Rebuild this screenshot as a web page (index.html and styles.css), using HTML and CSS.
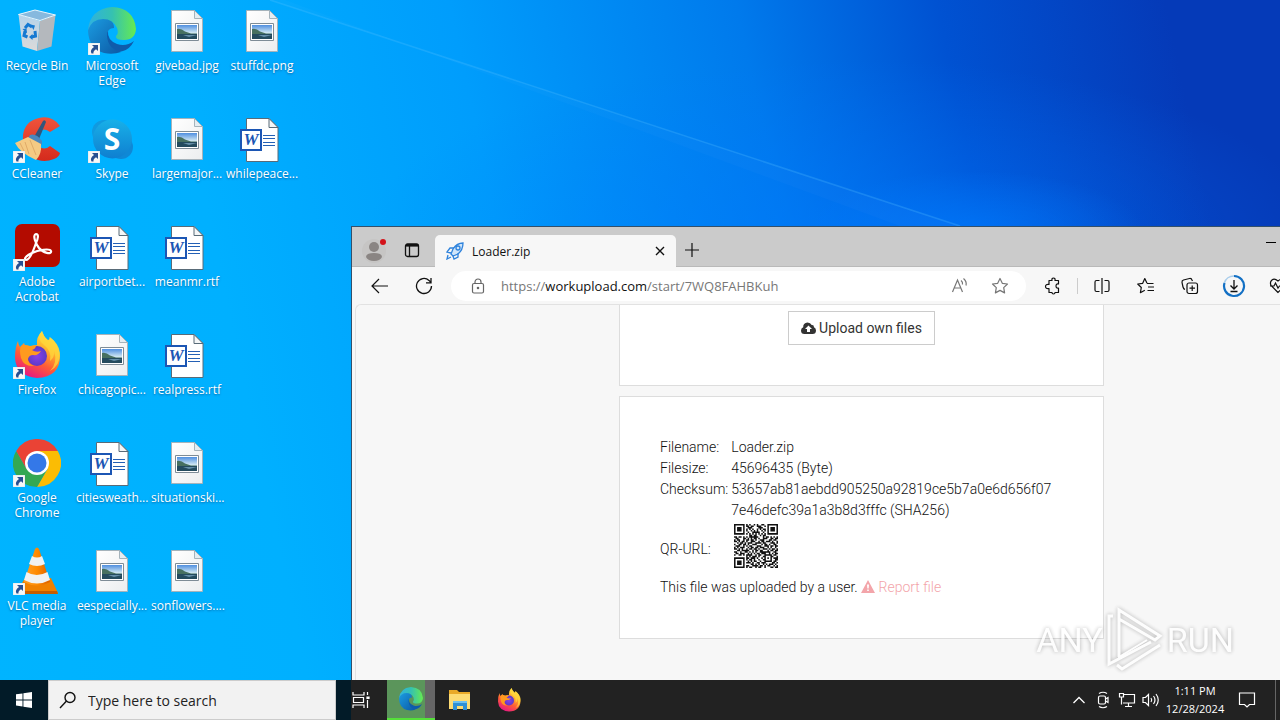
FILE: index.html
```html
<!DOCTYPE html>
<html lang="en">
<head>
<meta charset="utf-8">
<title>Desktop</title>
<link rel="stylesheet" href="styles.css">
</head>
<body>
<svg class="defs" aria-hidden="true">
  <defs>
    <linearGradient id="edgeBlue" x1="0" y1="0" x2="1" y2="1"><stop offset="0" stop-color="#1b9de2"/><stop offset="1" stop-color="#0c59a4"/></linearGradient>
    <linearGradient id="edgeTop" x1="0" y1="0" x2="1" y2="0"><stop offset="0" stop-color="#2fb1e0"/><stop offset=".5" stop-color="#35c1b1"/><stop offset="1" stop-color="#66eb50"/></linearGradient>
    <linearGradient id="skypeG" x1="0" y1="0" x2="0" y2="1"><stop offset="0" stop-color="#18b0e8"/><stop offset="1" stop-color="#0f7fd0"/></linearGradient>
    <linearGradient id="foxG" x1=".8" y1="0" x2=".3" y2="1"><stop offset="0" stop-color="#fff44f"/><stop offset=".35" stop-color="#ffb32c"/><stop offset=".65" stop-color="#ff5b36"/><stop offset="1" stop-color="#e61587"/></linearGradient>
    <radialGradient id="foxP"><stop offset="0" stop-color="#8a40e8"/><stop offset="1" stop-color="#5b3ac8"/></radialGradient>
    <linearGradient id="binG" x1="0" y1="0" x2="0" y2="1"><stop offset="0" stop-color="#b4d3ea"/><stop offset="1" stop-color="#dcdad9"/></linearGradient>
    <linearGradient id="pageG" x1="0" y1="0" x2="1" y2="1"><stop offset="0" stop-color="#fff"/><stop offset="1" stop-color="#eceeef"/></linearGradient>
    <linearGradient id="skyG" x1="0" y1="0" x2="0" y2="1"><stop offset="0" stop-color="#4f8fe0"/><stop offset=".55" stop-color="#cfe6f2"/></linearGradient>
    <linearGradient id="ccG" x1="0" y1="0" x2="0" y2="1"><stop offset="0" stop-color="#f0543c"/><stop offset="1" stop-color="#d42a1c"/></linearGradient>
    <linearGradient id="coneG" x1="0" y1="0" x2="1" y2="0"><stop offset="0" stop-color="#ffa02a"/><stop offset=".5" stop-color="#ff8a00"/><stop offset="1" stop-color="#d95f00"/></linearGradient>
  </defs>
  <symbol id="shortcut" viewBox="0 0 12 12"><path fill="#f7f7f7" stroke="#c9d4dc" stroke-width=".5" d="M0 0h12v12H0z"/><path fill="#284f91" d="M4 2h6v6L8 6.200Q5 8 5.500 10.500L3.500 10.500Q1.500 7 6 4z"/></symbol>
  <symbol id="bin" viewBox="0 0 48 48">
    <path fill="url(#binG)" d="M5.500 7.500 27 14 24 44 9.500 39.500z"/><path fill="#b4b8bd" d="M27 14 42.500 8 38.500 39.500 24 44z"/>
    <path fill="#86b9de" d="M5.500 7.500 22 3l20.500 5L27 13.500z"/><path fill="none" stroke="#e9f5fc" d="M5.500 7.500 22 3l20.500 5L27 13.500z"/>
    <g fill="none" stroke="#1479d2" stroke-width="3"><path d="m12 21 3-3.500 4 2.500M22 24l.500 5-4 1M14.500 30l-3.500-1.500 1-4.500"/></g>
    <g fill="#1479d2"><path d="m17.500 17.500 4.500 1-1.500 4.500zM19.500 27v6l-3.500-3zM9.500 22l4-.500.500 5z"/></g>
  </symbol>
  <symbol id="edge" viewBox="0 0 48 48">
    <path fill="#0f5cab" d="M11 17Q5 29 13 39q9 9 22 5 7-2 11-10Q38 40 29 37 19 33 20 24z"/>
    <path fill="url(#edgeBlue)" d="M0 24Q1 12 14 11q12 0 12 10-7 0-7 8 1 13 14 16-8 3-17 1Q1 42 0 24z"/>
    <path fill="url(#edgeTop)" d="M0 23Q2 2 24 0q22 1 24 22-1 11-12 11-9 0-8-4 3-3 1-8-4-9-14-9Q4 12 0 23z"/>
  </symbol>
  <symbol id="photo" viewBox="0 0 48 48">
    <path fill="url(#pageG)" stroke="#a5b3bb" d="M8.500 3.500h23l8 8v33h-31z"/><path fill="#e3edf2" stroke="#a5b3bb" d="M31.500 3.500v8h8z"/>
    <path fill="#fff" stroke="#7e8c96" d="M12.500 16.500h23v17h-23z"/><path fill="url(#skyG)" d="M14 18h20v14H14z"/><path fill="#477060" d="M14 22q4-1 8 2.500l6 2h6v2H14z"/><path fill="#244b5e" d="M14 27h20v5H14z"/><path fill="#658fa8" d="M20 28h14l-8 2z"/>
  </symbol>
  <symbol id="word" viewBox="0 0 48 48">
    <path fill="#fff" stroke="#596b78" d="M8.500 3.500H31l9 9v34H8.500z"/><path fill="#f4f6f7" stroke="#596b78" d="M31 3.500v9h9z"/>
    <g stroke="#2460b5" stroke-width="1.200"><path d="M25 20.500h12M25 23.500h12M25 27.500h12M25 30.500h12"/></g>
    <path fill="#fff" stroke="#1c56b4" stroke-width="2" d="M3 15h20v20H3z"/>
  </symbol>
  <symbol id="ccleaner" viewBox="0 0 48 48">
    <path fill="url(#ccG)" d="M47 11Q39 0 26 3 12 6 10 20q-1 15 9 22 10 7 22 2 5-2 6-6l-10-7q-6 5-11 0-5-6 0-14 5-5 11 0z"/>
    <path fill="#31567c" d="M30 6q2-2 3 1l-7 17-5-2z"/><path fill="#4b87bd" d="M17 20q6-2 12 6v4l-14-7z"/>
    <path fill="#f5ca83" d="M15 22 2 28q5 10 21 17 6-6 5-16z"/><path fill="none" stroke="#e0ab68" d="m12 27 4 12m1-14 6 15m-16-12 4 8"/>
  </symbol>
  <symbol id="skype" viewBox="0 0 48 48"><circle cx="16" cy="17" r="12" fill="#109ae0"/><circle cx="33" cy="32" r="12" fill="#0f88d6"/><circle cx="24.500" cy="24" r="19.500" fill="url(#skypeG)"/></symbol>
  <symbol id="acrobat" viewBox="0 0 48 48"><rect x="2" y="1" width="45" height="43" rx="7" fill="#b30b00"/><path fill="none" stroke="#fff" stroke-width="2.200" stroke-linejoin="round" d="M23 11c-4 1 0 10 3 14 4 5 13 7 12 3-1-3-13-1-19 2-5 2-9 6-6 7 4 0 8-11 10-17 2-4 3-9 0-9z"/></symbol>
  <symbol id="firefox" viewBox="0 0 48 48">
    <path fill="url(#foxG)" d="M5 10q0 3 2 6l4-4q1 4 5 4 5-2 8-2-1-8 5-14 1 5 6 9 3-1 2-3 9 7 10 19 0 21-23 22Q3 45 2 27 2 16 5 10z"/>
    <circle cx="24" cy="25" r="10" fill="url(#foxP)"/>
    <path fill="#ff9a1e" d="M8 15q4-2 9 0l6-1q0 4-4 5 4 3 9 1-3 5-8 4-4 0-5 4 0 5 6 7-10 1-13-8-2-8 0-12z"/><path fill="#ffd83c" d="M29 0q-6 8 2 14 8 6 6 16 5-4 4-10 4 12-4 20 10-5 10-18Q46 12 36 6q1 5-1 4-4-4-6-10z" opacity=".75"/>
  </symbol>
  <symbol id="chrome" viewBox="0 0 48 48"><path fill="#ea4335" d="M3.200 12A24 24 0 0 1 44.800 12H24z"/><path fill="#fbbc04" d="M44.800 12A24 24 0 0 1 24 48L34.400 30 24 12z"/><path fill="#34a853" d="M24 48A24 24 0 0 1 3.200 12L13.600 30l20.800 0z"/><path fill="#ea4335" d="M3.200 12 13.600 30 24 24V12z"/><circle cx="24" cy="24" r="12" fill="#fff"/><circle cx="24" cy="24" r="9.500" fill="#3478e8"/></symbol>
  <symbol id="vlc" viewBox="0 0 48 48"><path fill="#f08000" d="M12 31h26l7 15H3z"/><path fill="#c65d00" d="M4 44h40l1 3H3z"/><path fill="url(#coneG)" d="M22 2q2-3 4 0l11 33q-13 7-26 0z"/><path fill="#f1f1f1" d="m19 9-3 8q8 4 16 0l-3-8q-5 3-10 0zM13.500 25 11 33q13 7 26 0l-2.500-8q-11 6-21 0z"/></symbol>
  <symbol id="folder" viewBox="0 0 24 24"><path fill="#e9a928" d="M1 2h8l2 2h11v4H1z"/><path fill="#fddb73" d="M1 6h21v15H1z"/><path fill="#2f8fd5" d="M5 13h14v9h-4v-4H9v4H5z"/><path fill="#6ec0f0" d="M5 13h14v2H5z"/></symbol>
</svg>

<div class="desktop">
  <svg class="rays" viewBox="0 0 1280 720" preserveAspectRatio="none" aria-hidden="true"><path d="M270 0 960 226H900L285 0z" fill="#fff" opacity=".02"/><path d="m270 0 690 226" stroke="#5cc4ff" stroke-width="1.500" opacity=".25"/></svg>

  <main class="icons">
    <div class="item"><div class="pic"><svg><use href="#bin"/></svg></div><span>Recycle Bin</span></div>
    <div class="item"><div class="pic"><svg><use href="#ccleaner"/></svg><svg class="arrow"><use href="#shortcut"/></svg></div><span>CCleaner</span></div>
    <div class="item"><div class="pic"><svg><use href="#acrobat"/></svg><svg class="arrow"><use href="#shortcut"/></svg></div><span>Adobe Acrobat</span></div>
    <div class="item"><div class="pic"><svg><use href="#firefox"/></svg><svg class="arrow"><use href="#shortcut"/></svg></div><span>Firefox</span></div>
    <div class="item"><div class="pic"><svg><use href="#chrome"/></svg><svg class="arrow"><use href="#shortcut"/></svg></div><span>Google Chrome</span></div>
    <div class="item"><div class="pic"><svg><use href="#vlc"/></svg><svg class="arrow"><use href="#shortcut"/></svg></div><span>VLC media player</span></div>
    <div class="item"><div class="pic"><svg><use href="#edge"/></svg><svg class="arrow"><use href="#shortcut"/></svg></div><span>Microsoft Edge</span></div>
    <div class="item"><div class="pic"><svg><use href="#skype"/></svg><b class="skype-mark">S</b><svg class="arrow"><use href="#shortcut"/></svg></div><span>Skype</span></div>
    <div class="item"><div class="pic"><svg><use href="#word"/></svg><b class="word-mark">W</b></div><span>airportbet...</span></div>
    <div class="item"><div class="pic"><svg><use href="#photo"/></svg></div><span>chicagopic...</span></div>
    <div class="item"><div class="pic"><svg><use href="#word"/></svg><b class="word-mark">W</b></div><span>citiesweath...</span></div>
    <div class="item"><div class="pic"><svg><use href="#photo"/></svg></div><span>eespecially...</span></div>
    <div class="item"><div class="pic"><svg><use href="#photo"/></svg></div><span>givebad.jpg</span></div>
    <div class="item"><div class="pic"><svg><use href="#photo"/></svg></div><span>largemajor...</span></div>
    <div class="item"><div class="pic"><svg><use href="#word"/></svg><b class="word-mark">W</b></div><span>meanmr.rtf</span></div>
    <div class="item"><div class="pic"><svg><use href="#word"/></svg><b class="word-mark">W</b></div><span>realpress.rtf</span></div>
    <div class="item"><div class="pic"><svg><use href="#photo"/></svg></div><span>situationski...</span></div>
    <div class="item"><div class="pic"><svg><use href="#photo"/></svg></div><span>sonflowers....</span></div>
    <div class="item"><div class="pic"><svg><use href="#photo"/></svg></div><span>stuffdc.png</span></div>
    <div class="item"><div class="pic"><svg><use href="#word"/></svg><b class="word-mark">W</b></div><span>whilepeace...</span></div>
  </main>

  <section class="window" aria-label="Browser">
    <header class="tabstrip">
      <button class="profile" aria-label="Profile"><svg width="28" height="28" viewBox="0 0 28 28"><circle cx="12" cy="15" r="12" fill="#c6c5c4"/><circle cx="12" cy="11" r="5" fill="#8a8583"/><path fill="#8a8583" d="M4 21q0-4 8-4t8 4q-2 4-8 4t-8-4z"/><circle cx="21" cy="6" r="3" fill="#d3131a"/></svg></button>
      <button class="tabmenu" aria-label="Tab actions"><svg width="16" height="16" viewBox="0 0 16 16" fill="none" stroke="#111" stroke-width="1.300"><rect x="1.500" y="2" width="13" height="12.500" rx="2"/><path stroke-width="2.600" d="M2 3.300h12"/><path d="M5.500 4v10"/></svg></button>
      <div class="tab">
        <svg width="18" height="18" viewBox="0 0 18 18" fill="none" stroke="#2f83dc" stroke-width="1.300"><path fill="#cfe5fa" d="M17 1q-6 0-10 6l-2 5 2 2 5-2q5-4 5-11z"/><path d="M8 6H4L1 10l4 1M12 11v4l-4 2-1-3M2 13l-1 4 4-2"/><circle cx="12" cy="6" r="2"/></svg>
        <span class="title">Loader.zip</span>
        <button aria-label="Close tab"><svg width="10" height="10" viewBox="0 0 10 10" stroke="#111" stroke-width="1.400"><path d="m1 1 8 8m0-8-8 8"/></svg></button>
      </div>
      <button class="newtab" aria-label="New tab"><svg width="14" height="14" viewBox="0 0 14 14" stroke="#111" stroke-width="1.200"><path d="M0 7h14M7 0v14"/></svg></button>
      <button class="minimize" aria-label="Minimize"><svg width="10" height="10" viewBox="0 0 10 10" stroke="#000"><path d="M0 2.500h10"/></svg></button>
    </header>

    <nav class="toolbar">
      <button aria-label="Back"><svg width="18" height="16" viewBox="0 0 18 16" fill="none" stroke="#111" stroke-width="1.200"><path d="M17 8H1m7-7L1 8l7 7"/></svg></button>
      <button aria-label="Refresh"><svg width="18" height="18" viewBox="0 0 18 18" fill="none" stroke="#111" stroke-width="1.300"><path d="M16.500 9A7.500 7.500 0 1 1 14 3.400L16 5.500M16 1v4.800h-5"/></svg></button>
      <div class="address">
        <svg width="14" height="16" viewBox="0 0 14 16" fill="none" stroke="#666" stroke-width="1.200"><rect x="1.500" y="5.500" width="11" height="9.500" rx="1.500"/><path d="M4 5.500V4a3 3 0 0 1 6 0v1.500"/><circle cx="7" cy="10" r=".7" fill="#666"/></svg>
        <a class="url" href="#">https://<b>workupload.com</b>/start/7WQ8FAHBKuh</a>
        <button aria-label="Read aloud"><svg width="18" height="18" viewBox="0 0 18 18" fill="none" stroke="#777" stroke-width="1.200"><path d="m1.500 15 5-12 5 12M3.300 11h6.500M10 3.500q2 1.500 1.500 4M12.500 1.500q3.500 3 2.500 7"/></svg></button>
        <button aria-label="Add to favorites"><svg width="18" height="18" viewBox="0 0 18 18" fill="none" stroke="#777" stroke-width="1.200" stroke-linejoin="round"><path d="m9 1.500 2.300 4.800 5.200.7-3.800 3.600.9 5.300L9 13.400l-4.600 2.500.9-5.300L1.500 7l5.200-.7z"/></svg></button>
      </div>
      <button aria-label="Extensions"><svg width="18" height="18" viewBox="0 0 18 18" fill="none" stroke="#111" stroke-width="1.200" stroke-linejoin="round"><path d="M5 3.500h3q-.5-2.500 1.500-2.500t1.500 2.500h3.500V7q-2.500-.5-2.500 2t2.500 2v4.500h-3.500Q11 17 9.500 17T8 15.500H5v-4Q1.500 12 1.500 9.500T5 7.500V3.500z"/></svg></button>
      <span class="rule"></span>
      <button aria-label="Split screen"><svg width="18" height="18" viewBox="0 0 18 18" fill="none" stroke="#111" stroke-width="1.200"><path d="M9 1v16M6.500 3.500h-3q-1.500 0-1.500 1.500v8q0 1.500 1.500 1.500h3M11.500 3.500h3Q16 3.500 16 5v8q0 1.500-1.500 1.500h-3"/></svg></button>
      <button aria-label="Favorites"><svg width="18" height="18" viewBox="0 0 18 18" fill="none" stroke="#111" stroke-width="1.200" stroke-linejoin="round"><path d="M10 6.300 7.800 1.500 5.700 6.300l-5 .7 3.600 3.500-.9 5.200 4.400-2.400M10 6.500h6.500M11 10h6M10.500 13.500h6.500"/></svg></button>
      <button aria-label="Collections"><svg width="18" height="18" viewBox="0 0 18 18" fill="none" stroke="#111" stroke-width="1.200"><rect x="6" y="6" width="10.500" height="10.500" rx="2"/><path d="M11.200 8.500v5.500M8.500 11.200H14M4 12.500Q2.500 12 2 10L1 5.500Q.7 3.500 2.500 3l6-1.500q2-.3 2.500 1.500l.5 1"/></svg></button>
      <button aria-label="Downloads"><svg width="24" height="24" viewBox="0 0 24 24" fill="none" stroke="#111" stroke-width="1.300"><path stroke="#a9cdeb" stroke-width="1.600" d="M2.300 9A10 10 0 0 1 12 2"/><path stroke="#1370c4" stroke-width="2.200" d="M12 2A10 10 0 1 1 2.500 9"/><path d="M12 6v9M8.500 11.500 12 15l3.500-3.500M8.500 17.500h7"/></svg></button>
      <button aria-label="Browser essentials"><svg width="18" height="18" viewBox="0 0 18 18" fill="none" stroke="#111" stroke-width="1.200"><path d="M9 15.500 2 8.500Q.5 5 3 3t6 1q3.500-3 6-1t1 5.500zM1 9h4l1.500-3 2.500 5 1.500-2H16"/></svg></button>
    </nav>

    <div class="page">
      <article class="card upload">
        <button class="btn"><svg width="15" height="12" viewBox="0 0 15 12" fill="#333"><path fill-rule="evenodd" d="M3.500 12Q0 12 0 8.500 0 6 2.200 5.200 2 1 6.500.5 9.500.5 10.700 3q2.300-.3 2.300 2.200 2 1 2 3.300 0 3.500-3.500 3.500zM9 10V7h2L7.500 3.500 4 7h2v3z"/></svg> Upload own files</button>
      </article>
      <article class="card">
        <table>
          <tr><th scope="row">Filename:</th><td>Loader.zip</td></tr>
          <tr><th scope="row">Filesize:</th><td>45696435 (Byte)</td></tr>
          <tr><th scope="row">Checksum:</th><td>53657ab81aebdd905250a92819ce5b7a0e6d656f077e46defc39a1a3b8d3fffc (SHA256)</td></tr>
          <tr class="qr-row"><th scope="row">QR-URL:</th><td><svg id="qr" class="qr" viewBox="-2 -2 33 33" role="img" aria-label="QR code"></svg></td></tr>
        </table>
        <p>This file was uploaded by a user. <a href="#"><svg width="14" height="13" viewBox="0 0 14 13" fill="#f3a5aa"><path fill-rule="evenodd" d="M7 0 14 13H0zM6 4.500l.3 4h1.400l.3-4zM6.200 9.500v1.600h1.600V9.500z"/></svg> Report file</a></p>
      </article>
    </div>
  </section>

  <div class="watermark"><span>ANY</span>
    <svg width="60" height="66" viewBox="0 0 60 66" fill="none" stroke="#fff" stroke-width="3"><path d="M14 50V3l41 26-5 4-36-21M8 9H4v48l42-22M12 58l5 4 38-24"/><path stroke-width="2" d="M14 12v38l28-17"/></svg>
    <span>RUN</span></div>

  <footer class="taskbar">
    <button class="start" aria-label="Start"><svg width="16" height="16" viewBox="0 0 16 16" fill="#fff"><path d="M0 2.300 6.500 1.400v6.100H0zM7.400 1.300 16 0v7.500H7.400zM0 8.400h6.500v6.100L0 13.600zM7.400 8.400H16V16l-8.600-1.200z"/></svg></button>
    <label class="search"><svg width="18" height="18" viewBox="0 0 18 18" fill="none" stroke="#111" stroke-width="1.400"><circle cx="11" cy="6.500" r="5"/><path d="M7.500 10 1 17"/></svg><input type="text" placeholder="Type here to search" aria-label="Search"></label>
    <button class="task" aria-label="Task view"><svg width="18" height="16" viewBox="0 0 18 16" fill="none" stroke="#fff" stroke-width="1.200"><path d="M1 0v3h11V0M1 16v-3h11v3M1.500 5.500h10v5h-10zM15.500 0v3M15.500 8v8"/><path fill="#fff" d="M15 5h2v1.500h-2z"/></svg></button>
    <button class="task active" aria-label="Microsoft Edge"><svg width="24" height="24"><use href="#edge"/></svg></button>
    <button class="task" aria-label="File Explorer"><svg width="24" height="24"><use href="#folder"/></svg></button>
    <button class="task" aria-label="Firefox"><svg width="24" height="24"><use href="#firefox"/></svg></button>
    <div class="tray">
      <svg width="24" height="18" viewBox="0 0 24 18" fill="none" stroke="#fff" stroke-width="1.300"><path d="m6.500 12 5.500-5.500 5.500 5.500"/></svg>
      <svg width="24" height="18" viewBox="0 0 24 18" fill="none" stroke="#fff" stroke-width="1.200"><rect x="7.500" y="5" width="7" height="8" rx="1.500"/><path d="m14.500 8 2.500-1.500v5L14.500 10M8 2.500q4-2.500 8 0M8 15.500q4 2.500 8 0"/></svg>
      <svg width="24" height="18" viewBox="0 0 24 18" fill="none" stroke="#fff" stroke-width="1.200"><path d="M9 3.500h10.500v8.500H8M13.500 12v3.500M10 15.500h7M4.500 2.500h4v3.500h-4zM6.500 6v7.500"/></svg>
      <svg width="24" height="18" viewBox="0 0 24 18" fill="none" stroke="#fff" stroke-width="1.200"><path d="M4 6.500h2.500l3-3v11l-3-3H4zM12 7q1.500 2 0 4M14.500 5q3 4 0 8M17 3q4.500 6 0 12"/></svg>
      <time><span>1:11 PM</span><span>12/28/2024</span></time>
      <button aria-label="Notifications"><svg width="18" height="18" viewBox="0 0 18 18" fill="none" stroke="#fff" stroke-width="1.200"><path d="M1.500 2h15v11.500h-5L9 16l-2.500-2.500h-5z"/></svg></button>
      <span class="peek"></span>
    </div>
  </footer>
</div>
<script src="qr.js"></script>
</body>
</html>
```

FILE: qr.js
```js
// Module rows of the code, 29 bits each; the three finders are added on top.
const rows = [
  0x00b4a600, 0x005b3900, 0x006e1c00, 0x00352b00, 0x00d2a500, 0x0029f200, 0x00555500, 0x00a6cb00,
  0x1b57e2d5, 0x0c6ad39b, 0x165b4e36, 0x1ad396e9, 0x05ae7b1d, 0x1369c5a6, 0x0e5639db, 0x15cb6e52,
  0x1a96d3ad, 0x06f96c5b, 0x19354fe6, 0x0dcab72b, 0x135e59f6, 0x00b5d319, 0x00dba557, 0x00569353,
  0x006ac9f6, 0x009d370d, 0x00e352ba, 0x0059ed65, 0x00b6591b
];
const dark = [];
const finder = (x, y, left, top) => {
  const cx = x - left, cy = y - top;
  const ring = Math.max(Math.abs(cx - 3), Math.abs(cy - 3));
  return ring === 3 || ring < 2;
};
for (let y = 0; y < 29; y++) {
  for (let x = 0; x < 29; x++) {
    let on;
    if (x < 8 && y < 8) on = x < 7 && y < 7 && finder(x, y, 0, 0);
    else if (x > 20 && y < 8) on = x > 21 && y < 7 && finder(x, y, 22, 0);
    else if (x < 8 && y > 20) on = x < 7 && y > 21 && finder(x, y, 0, 22);
    else if (x > 19 && x < 25 && y > 19 && y < 25) on = Math.max(Math.abs(x - 22), Math.abs(y - 22)) !== 1;
    else on = (rows[y] >>> (28 - x)) & 1;
    if (on) dark.push(`M${x} ${y}h1v1h-1z`);
  }
}
document.getElementById("qr").innerHTML = `<path fill="#111" d="${dark.join("")}"/>`;
```

FILE: styles.css
```css
* { box-sizing: border-box; }
body { margin: 0; font-family: "Open Sans", "Noto Sans", sans-serif; font-size: 12px; }
button { border: 0; padding: 0; background: none; font: inherit; color: inherit; display: flex; align-items: center; justify-content: center; flex: none; }
svg { flex: none; }
a { color: inherit; text-decoration: none; }
.defs { position: absolute; width: 0; height: 0; }

.desktop {
  position: relative; height: 100vh; overflow: hidden;
  display: grid; grid-template-rows: 1fr 40px;
  background:
    radial-gradient(ellipse 170px 60px at 76% 32%, rgba(0, 125, 255, .6), rgba(0, 110, 255, 0)),
    radial-gradient(ellipse 480px 180px at 66% 33%, rgba(0, 120, 255, .5), rgba(0, 110, 255, 0)),
    linear-gradient(78deg, #00b4ff 0%, #00b0ff 22%, #009dfc 42%, #007aec 62%, #0052d2 76%, #053ab8 92%);
}
.rays { position: absolute; inset: 0; width: 100%; height: 100%; }

.icons { position: relative; display: grid; grid-auto-flow: column; grid-template-rows: repeat(6, 108px); grid-auto-columns: 74px; column-gap: 1px; align-content: start; justify-content: start; }
.item { display: flex; flex-direction: column; align-items: center; gap: 3px; padding-top: 7px; color: #fff; line-height: 15px; text-align: center; text-shadow: 0 1px 2px rgba(0, 40, 90, .5); font-size: 12px; }
.item span { max-width: 72px; }
.pic { position: relative; width: 48px; height: 48px; }
.pic svg { width: 48px; height: 48px; display: block; }
.pic .arrow { position: absolute; left: 0; bottom: 0; width: 12px; height: 12px; }
.word-mark, .skype-mark { position: absolute; text-align: center; text-shadow: none; }
.word-mark { left: 3px; top: 14px; width: 20px; font: italic bold 17px/22px "Liberation Serif", serif; color: #1c56b4; }
.skype-mark { left: 0; top: 8px; width: 48px; font: bold 30px/32px "Open Sans", sans-serif; }

.window { position: absolute; left: 351px; right: 0; top: 226px; bottom: 40px; display: flex; flex-direction: column; overflow: hidden; background: #f7f7f7; border: solid #33506b; border-width: 1px 0 0 1px; }
.tabstrip { display: flex; height: 40px; background: #cbcbcb; border-bottom: 1px solid #b9b9b9; align-items: flex-end; padding-left: 10px; flex: none; }
.profile { width: 28px; height: 32px; }
.tabmenu { width: 44px; height: 32px; margin-right: 1px; }
.tab { display: flex; align-items: center; gap: 8px; width: 241px; height: 32px; margin-bottom: -1px; padding: 0 6px 0 11px; background: #f7f7f7; border-radius: 5px 5px 0 0; color: #111; }
.tab .title { flex: 1; }
.tab button { width: 20px; height: 20px; }
.newtab { width: 32px; height: 32px; }
.minimize { align-self: flex-start; margin-left: auto; margin-right: 4px; height: 36px; }

.toolbar { display: flex; align-items: center; height: 37px; padding-left: 6px; margin-right: -20px; flex: none; }
.toolbar > button { width: 44px; height: 32px; }
.toolbar .address { flex: 1; display: flex; align-items: center; height: 30px; margin: 0 5px 0 5px; padding: 0 6px 0 20px; background: #fff; border-radius: 15px; }
.url { flex: 1; margin-left: 16px; font-size: 13px; color: #777; }
.url b { color: #111; font-weight: 400; }
.address button { width: 40px; height: 28px; }
.rule { width: 1px; height: 16px; background: #ccc; margin: 0 2px; }

.page { flex: 1; display: flex; flex-direction: column; align-items: center; gap: 10px; margin-left: 3px; padding-left: 87px; border: solid #e2e2e2; border-width: 1px 0 0 1px; border-top-left-radius: 6px; background: #f7f7f7; font: 300 14px/21px Roboto, sans-serif; color: #111; overflow: hidden; }
.card { width: 485px; flex: none; padding: 40px; background: #fff; border: 1px solid #ddd; }
.upload { padding-top: 6px; border-top: 0; display: flex; justify-content: center; }
.btn { height: 34px; gap: 3px; padding: 0 12px; border: 1px solid #ccc; font-weight: 400; color: #333; background: #fff; }
table { border-collapse: collapse; }
th, td { padding: 0; text-align: left; font-weight: inherit; vertical-align: top; }
th { padding-right: 3px; min-width: 71px; }
td { word-break: break-all; padding-right: 9px; }
.qr-row th { vertical-align: middle; }
.qr-row td { padding-bottom: 6px; }
.qr { display: block; width: 50px; height: 50px; }
.card p { margin: 0; }
.card a { color: #f3a5aa; }
.card a svg { vertical-align: -1px; }

.watermark { position: absolute; right: 46px; bottom: 47px; display: flex; align-items: center; gap: 2px; color: #fff; font: 34px/1 "Liberation Sans Narrow", Roboto, sans-serif; opacity: .8; filter: drop-shadow(0 0 2px rgba(0, 0, 0, .35)); }

.taskbar { position: relative; display: flex; align-items: stretch; color: #fff; background: linear-gradient(to right, #021b28 351px, #222 351px); }
.start { width: 48px; }
.search { display: flex; align-items: center; gap: 11px; width: 288px; padding: 0 10px; background: #f2f2f2; border: 1px solid #ccc; }
.search input { flex: 1; min-width: 0; border: 0; padding: 0; background: none; outline: 0; font: 14px "Open Sans", sans-serif; color: #222; }
.search input::placeholder { color: #222; opacity: 1; }
.task { width: 49px; }
.task.active { width: 48px; margin-left: 2px; background: linear-gradient(to right, #5b955b 38px, #666 38px); border-bottom: 2px solid #55e03a; }
.tray { display: flex; align-items: center; margin-left: auto; }
.tray time { display: flex; flex-direction: column; align-items: center; width: 64px; font-size: 11px; line-height: 18px; }
.tray button { width: 40px; }
.peek { align-self: stretch; width: 5px; margin-left: 8px; border-left: 1px solid #666; }
```
